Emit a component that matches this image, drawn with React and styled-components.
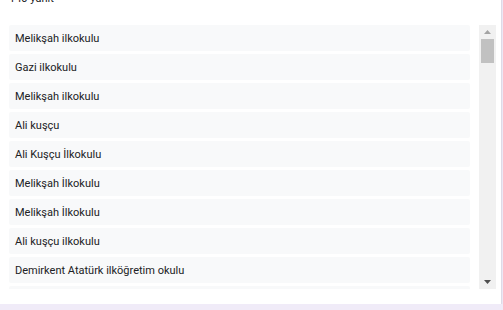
import React from "react";
import styled, { createGlobalStyle } from "styled-components";

const GlobalStyle = createGlobalStyle`
  html, body {
    margin: 0;
    padding: 0;
    background: #f0ebf8;
    overflow: hidden;
  }
`;

const Card = styled.div`
  width: 501px;
  background: #fff;
  box-shadow: 0 1px 2px rgba(60, 64, 67, 0.3);
  padding-bottom: 15px;
  font-family: Roboto, "Liberation Sans", Arial, sans-serif;
`;

const Count = styled.div`
  margin-top: -7px;
  height: 32px;
  padding-left: 9px;
  font-size: 11px;
  line-height: 12px;
  color: #202124;
`;

const Body = styled.div`
  display: flex;
  height: 264px;
  margin-right: 5px;
`;

const List = styled.div`
  flex: 1;
  padding: 0 9px;
  overflow: hidden;
  display: flex;
  flex-direction: column;
  gap: 3px;
`;

const Answer = styled.div`
  flex: none;
  height: 26px;
  padding-left: 6px;
  background: #f8f9fa;
  border-radius: 2px;
  display: flex;
  align-items: center;
  font-size: 11px;
  color: #202124;
  white-space: nowrap;
`;

const Scrollbar = styled.div`
  width: 17px;
  background: #f1f1f1;
  display: flex;
  flex-direction: column;
`;

const ArrowButton = styled.div`
  height: 14px;
  display: flex;
  align-items: center;
  justify-content: center;
`;

const Track = styled.div`
  flex: 1;
  padding: 0 2px;
`;

const Thumb = styled.div`
  height: 24px;
  background: #c1c1c1;
`;

const Arrow = ({ down, color }) => (
  <svg width="7" height="4" viewBox="0 0 7 4">
    <polygon points={down ? "0,0 7,0 3.5,4" : "0,4 7,4 3.5,0"} fill={color} />
  </svg>
);

const answers = [
  "Melikşah ilkokulu",
  "Gazi ilkokulu",
  "Melikşah ilkokulu",
  "Ali kuşçu",
  "Ali Kuşçu İlkokulu",
  "Melikşah İlkokulu",
  "Melikşah İlkokulu",
  "Ali kuşçu ilkokulu",
  "Demirkent Atatürk ilköğretim okulu",
  "Gazi İlkokulu",
];

export default function App() {
  return (
    <>
      <GlobalStyle />
      <Card>
        <Count>140 yanıt</Count>
        <Body>
          <List>
            {answers.map((a, i) => (
              <Answer key={i}>{a}</Answer>
            ))}
          </List>
          <Scrollbar>
            <ArrowButton>
              <Arrow color="#a3a3a3" />
            </ArrowButton>
            <Track>
              <Thumb />
            </Track>
            <ArrowButton>
              <Arrow down color="#505050" />
            </ArrowButton>
          </Scrollbar>
        </Body>
      </Card>
    </>
  );
}
